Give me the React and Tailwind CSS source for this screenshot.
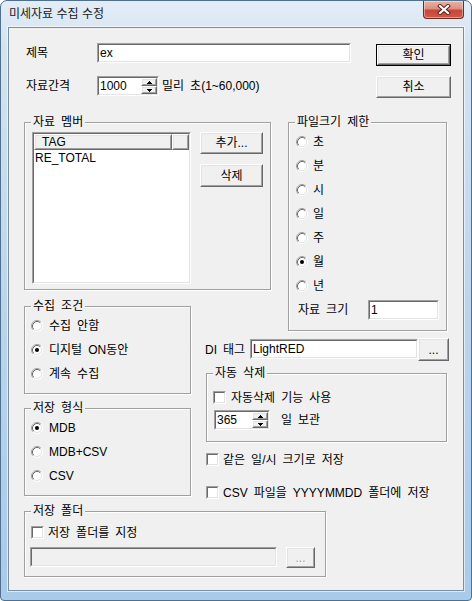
import React from "react";

function Sunken({ className = "", inner = "", disabled, children }) {
  return (
    <div className={`border border-t-[#a0a0a0] border-l-[#a0a0a0] border-r-white border-b-white ${className}`}>
      <div
        className={`h-full w-full border border-t-[#696969] border-l-[#696969] border-r-[#e3e3e3] border-b-[#e3e3e3] overflow-hidden ${
          disabled ? "bg-[#f0f0f0]" : "bg-white"
        } ${inner}`}
      >
        {children}
      </div>
    </div>
  );
}

function Raised({ className = "", inner = "", children }) {
  return (
    <div className={`border border-t-white border-l-white border-r-[#696969] border-b-[#696969] ${className}`}>
      <div
        className={`h-full w-full border border-t-[#e3e3e3] border-l-[#e3e3e3] border-r-[#a0a0a0] border-b-[#a0a0a0] bg-[#f0f0f0] ${inner}`}
      >
        {children}
      </div>
    </div>
  );
}

function Btn({ className = "", def, disabled, children }) {
  const content = (
    <Raised className="h-full w-full" inner="flex items-center justify-center">
      <span className={disabled ? "text-[#a0a0a0] [text-shadow:1px_1px_0_#fff]" : ""}>{children}</span>
    </Raised>
  );
  if (def) {
    return <div className={`border border-black ${className}`}>{content}</div>;
  }
  return <div className={className}>{content}</div>;
}

function Radio({ checked }) {
  return (
    <svg width="12" height="12" viewBox="0 0 12 12" className="shrink-0">
      <circle cx="6" cy="6" r="5" fill="#fff" />
      <path d="M2.11 9.89A5.5 5.5 0 0 1 9.89 2.11" fill="none" stroke="#a0a0a0" />
      <path d="M9.89 2.11A5.5 5.5 0 0 1 2.11 9.89" fill="none" stroke="#ffffff" />
      <path d="M2.82 9.18A4.5 4.5 0 0 1 9.18 2.82" fill="none" stroke="#696969" />
      <path d="M9.18 2.82A4.5 4.5 0 0 1 2.82 9.18" fill="none" stroke="#e3e3e3" />
      {checked && <circle cx="6" cy="6" r="2" fill="#000" />}
    </svg>
  );
}

function RadioRow({ checked, label, gap = "ml-[5px]" }) {
  return (
    <div className="h-[24px] flex items-center">
      <Radio checked={checked} />
      <span className={gap}>{label}</span>
    </div>
  );
}

function Check() {
  return <Sunken className="w-[13px] h-[13px] shrink-0" />;
}

function Group({ title, className = "", children }) {
  return (
    <div className={`relative shrink-0 border border-[#a0a0a0] shadow-[inset_1px_1px_0_#fff,1px_1px_0_#fff] ${className}`}>
      <div className="absolute left-[6px] top-[-8px] bg-[#f0f0f0] px-[2px] leading-[14px] whitespace-nowrap">
        {title}
      </div>
      {children}
    </div>
  );
}

function Arrow({ down }) {
  return (
    <svg width="5" height="3" viewBox="0 0 5 3">
      {down ? (
        <path d="M0 0h5v1H4v1H3v1H2V2H1V1H0z" fill="#000" />
      ) : (
        <path d="M2 0h1v1h1v1h1v1H0V2h1V1h1z" fill="#000" />
      )}
    </svg>
  );
}

function Spin({ className = "", value }) {
  return (
    <Sunken className={className} inner="flex items-stretch">
      <div className="flex-1 flex items-center pl-[1px]">{value}</div>
      <div className="w-[16px] flex flex-col">
        <Raised className="flex-1" inner="flex items-center justify-center">
          <Arrow />
        </Raised>
        <Raised className="flex-1" inner="flex items-center justify-center">
          <Arrow down />
        </Raised>
      </div>
    </Sunken>
  );
}

function CloseBtn() {
  return (
    <div className="w-[41px] h-[18px] rounded-b-[4px] border border-t-0 border-[#6b2b22] bg-[linear-gradient(to_bottom,#eab3a6_0%,#dc8f80_45%,#c6463a_55%,#cf5a45_100%)] shadow-[inset_0_0_0_1px_rgba(255,255,255,0.4)] flex items-center justify-center">
      <svg width="14" height="11" viewBox="0 0 14 11">
        <path d="M3 2 L11 9 M11 2 L3 9" stroke="#5a1c14" strokeWidth="4" strokeLinecap="square" />
        <path d="M3 2 L11 9 M11 2 L3 9" stroke="#ffffff" strokeWidth="2.2" strokeLinecap="square" />
      </svg>
    </div>
  );
}

export default function App() {
  return (
    <div className="font-['Liberation_Sans','Noto_Sans_CJK_KR',sans-serif] text-[12px] leading-[14px] text-black">
      <div className="w-[472px] h-[601px] rounded-t-[7px] rounded-b-[4px] border border-[#50708f] bg-[linear-gradient(to_bottom,#e3edf7_0%,#d3e3f2_8%,#bcd5ed_50%,#a9cae9_100%)] flex flex-col overflow-hidden">
        {/* Title bar */}
        <div className="h-[26px] shrink-0 flex items-start justify-between pl-[8px] pr-[7px]">
          <div className="h-[26px] flex items-center text-[12px] text-[#1a1a1a]">미세자료 수집 수정</div>
          <CloseBtn />
        </div>

        {/* Client area */}
        <div className="mx-[7px] h-[564px] shrink-0 border border-[#7b8fa4] bg-[#f0f0f0] shadow-[0_0_0_1px_rgba(255,255,255,0.6)] [word-spacing:2.7px]">
          {/* Row 1 */}
          <div className="flex items-start pt-[15px] pl-[17px]">
            <div className="w-[71px] h-[20px] flex items-center">제목</div>
            <Sunken className="w-[254px] h-[20px]" inner="flex items-center pl-[1px]">
              ex
            </Sunken>
            <Btn def className="ml-[25px] mt-[1px] w-[75px] h-[22px]">
              확인
            </Btn>
          </div>

          {/* Row 2 */}
          <div className="flex items-start mt-[10px] pl-[17px]">
            <div className="w-[71px] h-[20px] flex items-center">자료간격</div>
            <Spin className="w-[62px] h-[20px]" value="1000" />
            <div className="w-[217px] h-[20px] flex items-center pl-[3px]">밀리 초(1~60,000)</div>
            <Btn className="w-[75px] h-[22px]">취소</Btn>
          </div>

          {/* Band A */}
          <div className="flex items-start mt-[24px] pl-[15px]">
            <Group title="자료 멤버" className="w-[247px] h-[168px]">
              <div className="flex items-start pl-[7px] pt-[9px]">
                <Sunken className="w-[159px] h-[152px]" inner="flex flex-col">
                  <div className="flex h-[16px] shrink-0">
                    <Raised className="w-[138px] h-full" inner="flex items-center pl-[6px]">
                      TAG
                    </Raised>
                    <Raised className="flex-1 h-full" />
                  </div>
                  <div className="h-[14px] flex items-center pl-[1px] mt-[1px]">RE_TOTAL</div>
                </Sunken>
                <div className="ml-[9px] flex flex-col">
                  <Btn className="w-[63px] h-[22px]">추가...</Btn>
                  <Btn className="w-[63px] h-[23px] mt-[10px]">삭제</Btn>
                </div>
              </div>
            </Group>

            <Group title="파일크기 제한" className="ml-[17px] w-[159px] h-[209px]">
              <div className="flex flex-col pl-[7px] pt-[7px]">
                <RadioRow label="초" />
                <RadioRow label="분" />
                <RadioRow label="시" />
                <RadioRow label="일" />
                <RadioRow label="주" />
                <RadioRow label="월" checked />
                <RadioRow label="년" />
                <div className="flex items-center mt-[2px] pl-[2px]">
                  <div className="w-[70px]">자료 크기</div>
                  <Sunken className="w-[71px] h-[20px]" inner="flex items-center pl-[1px]">
                    1
                  </Sunken>
                </div>
              </div>
            </Group>
          </div>

          {/* Band B */}
          <div className="flex items-start mt-[-25px] pl-[15px]">
            <div className="w-[167px] flex flex-col">
              <Group title="수집 조건" className="w-[167px] h-[88px]">
                <div className="flex flex-col pl-[6px] pt-[7px]">
                  <RadioRow label="수집 안함" gap="ml-[6px]" />
                  <RadioRow label="디지털 ON동안" checked gap="ml-[6px]" />
                  <RadioRow label="계속 수집" gap="ml-[6px]" />
                </div>
              </Group>
              <Group title="저장 형식" className="mt-[14px] w-[167px] h-[88px]">
                <div className="flex flex-col pl-[6px] pt-[7px]">
                  <RadioRow label="MDB" checked gap="ml-[6px]" />
                  <RadioRow label="MDB+CSV" gap="ml-[6px]" />
                  <RadioRow label="CSV" gap="ml-[6px]" />
                </div>
              </Group>
            </div>

            <div className="ml-[14px] pt-[32px] flex flex-col">
              <div className="flex items-start">
                <div className="w-[45px] h-[23px] flex items-center">DI 태그</div>
                <Sunken className="mt-[1px] w-[168px] h-[20px]" inner="flex items-center pl-[1px]">
                  LightRED
                </Sunken>
                <Btn className="w-[31px] h-[23px]">...</Btn>
              </div>

              <Group title="자동 삭제" className="ml-[1px] mt-[12px] w-[241px] h-[69px]">
                <div className="flex flex-col pl-[6px] pt-[17px]">
                  <div className="flex items-center h-[13px]">
                    <Check />
                    <span className="ml-[5px]">자동삭제 기능 사용</span>
                  </div>
                  <div className="flex items-center mt-[6px] pl-[1px]">
                    <Spin className="w-[56px] h-[20px]" value="365" />
                    <span className="ml-[11px]">일 보관</span>
                  </div>
                </div>
              </Group>

              <div className="flex items-center h-[13px] mt-[11px] pl-[1px]">
                <Check />
                <span className="ml-[4px]">같은 일/시 크기로 저장</span>
              </div>
              <div className="flex items-center h-[13px] mt-[20px] pl-[1px]">
                <Check />
                <span className="ml-[4px]">CSV 파일을 YYYYMMDD 폴더에 저장</span>
              </div>
            </div>
          </div>

          {/* Band C */}
          <div className="flex mt-[12px] pl-[15px]">
            <Group title="저장 폴더" className="w-[302px] h-[66px]">
              <div className="flex flex-col pl-[6px] pt-[14px]">
                <div className="flex items-center h-[13px]">
                  <Check />
                  <span className="ml-[4px]">저장 폴더를 지정</span>
                </div>
                <div className="flex items-start mt-[8px] ml-[-1px]">
                  <Sunken disabled className="w-[247px] h-[20px]" />
                  <Btn disabled className="ml-[9px] w-[29px] h-[21px]">
                    ...
                  </Btn>
                </div>
              </div>
            </Group>
          </div>
        </div>
      </div>
    </div>
  );
}
